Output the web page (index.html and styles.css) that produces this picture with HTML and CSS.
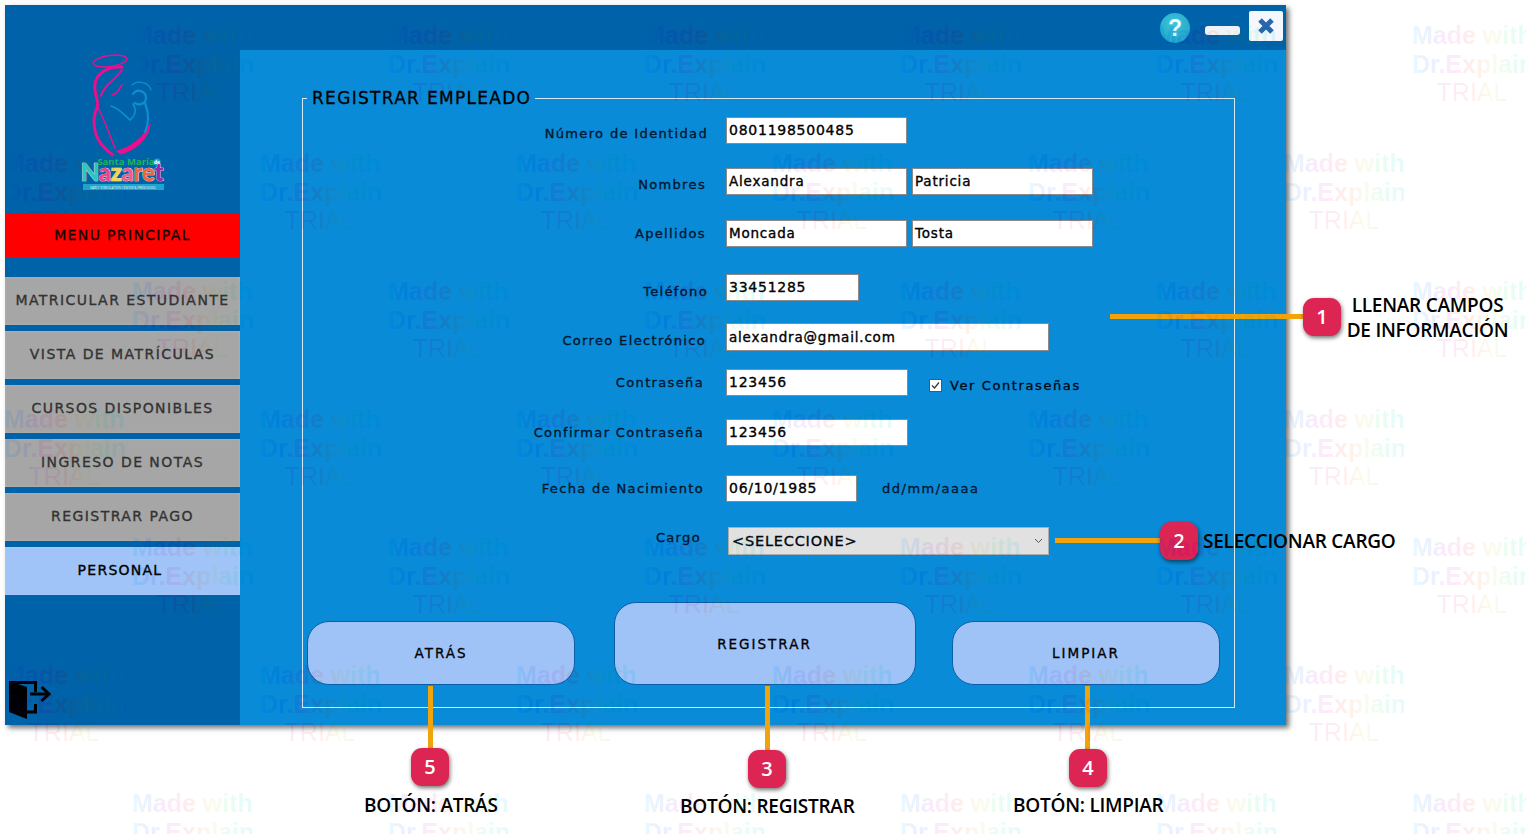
FILE: index.html
```html
<!DOCTYPE html>
<html lang="es">
<head>
<meta charset="utf-8">
<title>Registrar empleado</title>
<link rel="stylesheet" href="styles.css">
</head>
<body>
<div class="app">
  <aside class="side">
    <div class="logo">
      <svg width="95" height="148" viewBox="0 0 95 148">
        <g fill="none" stroke="#e8108c" stroke-linecap="round">
          <ellipse cx="35" cy="13" rx="17" ry="5.5" stroke-width="1.5" transform="rotate(-8 35 13)"/>
          <path d="M47 19C30 18 18 28 20 42C21 50 24 54 22 60C17 70 18 86 27 97C31 102 35 105 38 107" stroke-width="3"/>
          <path d="M47 22C40 32 28 38 26 48" stroke-width="2"/>
          <path d="M47 37C44 42 40 47 37 47" stroke-width="1.6"/>
          <path d="M22 58C30 72 34 86 40 100" stroke-width="1.5"/>
          <path d="M42 103C55 100 68 90 75 76C74 90 62 102 45 106Z" fill="#e8108c" stroke-width="1"/>
        </g>
        <g fill="none" stroke="#0b8fd0" stroke-linecap="round">
          <path d="M57 37C62 32 74 34 76 42" stroke-width="1.2"/>
          <path d="M58 46C62 40 71 43 71 50C71 56 64 58 60 55" stroke-width="2.2"/>
          <path d="M36 58C44 60 50 68 55 72C60 68 62 62 58 56" stroke-width="1.7"/>
          <path d="M70 55C74 65 74 75 70 84" stroke-width="2.2"/>
        </g>
        <text x="51" y="117" class="logo-small">Santa María</text>
        <circle cx="82" cy="114" r="3.5" fill="#1fa3cf"/>
        <text x="82" y="116" class="logo-de">de</text>
        <text x="47" y="133" class="logo-name"><tspan fill="#28c9c4">N</tspan><tspan fill="#f43f8c">a</tspan><tspan fill="#f6d34a">z</tspan><tspan fill="#f45a8c">a</tspan><tspan fill="#f2653a">r</tspan><tspan fill="#f2653a">e</tspan><tspan fill="#9a2ba8">t</tspan></text>
        <rect x="8" y="136" width="81" height="6" fill="#1fa3cf"/>
        <text x="48" y="140.5" class="logo-tiny">EARLY STIMULATION CENTER &amp; PRESCHOOL</text>
      </svg>
    </div>
    <div class="menu-title">MENU PRINCIPAL</div>
    <nav class="nav">
      <a class="nav-item">MATRICULAR ESTUDIANTE</a>
      <a class="nav-item">VISTA DE MATRÍCULAS</a>
      <a class="nav-item">CURSOS DISPONIBLES</a>
      <a class="nav-item">INGRESO DE NOTAS</a>
      <a class="nav-item">REGISTRAR PAGO</a>
      <a class="nav-item active">PERSONAL</a>
    </nav>
    <svg class="exit" width="44" height="44" viewBox="0 0 44 44">
      <path d="M1 2L19 8V40L1 33Z" fill="#000"/>
      <path d="M1 3.5H27.5V13M27.5 25V33H19" fill="none" stroke="#000" stroke-width="3"/>
      <path d="M22 15H40M33.5 8L41 15L33.5 22" fill="none" stroke="#000" stroke-width="3"/>
    </svg>
  </aside>
  <main class="main">
    <header class="titlebar">
      <span class="help">?</span>
      <span class="minimize"></span>
      <span class="close">
        <svg width="20" height="20" viewBox="0 0 20 20"><path d="M4 4L16 16M16 4L4 16" stroke="#2a66ad" stroke-width="5"/></svg>
      </span>
    </header>
    <div class="content">
      <fieldset class="panel">
        <legend class="legend">REGISTRAR EMPLEADO</legend>
        <div class="row r1"><label class="lbl low3">Número de Identidad</label><span class="inp w181">0801198500485</span></div>
        <div class="row r2"><label class="lbl pr2 low3">Nombres</label><span class="inp w181 thin">Alexandra</span><span class="inp w181 thin">Patricia</span></div>
        <div class="row r3"><label class="lbl pr2">Apellidos</label><span class="inp w181 thin">Moncada</span><span class="inp w181 thin">Tosta</span></div>
        <div class="row r4"><label class="lbl low4">Teléfono</label><span class="inp w133">33451285</span></div>
        <div class="row r5"><label class="lbl pr2 low4">Correo Electrónico</label><span class="inp w323 thin tall">alexandra@gmail.com</span></div>
        <div class="row r6"><label class="lbl pr4">Contraseña</label><span class="inp w182">123456</span><span class="check"><span class="box"><svg width="11" height="11" viewBox="0 0 11 11"><path d="M2 5.5L4.5 8L9 2.5" fill="none" stroke="#333" stroke-width="1.2"/></svg></span>Ver Contraseñas</span></div>
        <div class="row r7"><label class="lbl pr4">Confirmar Contraseña</label><span class="inp w182">123456</span></div>
        <div class="row r8"><label class="lbl pr4">Fecha de Nacimiento</label><span class="inp w131">06/10/1985</span><span class="hint">dd/mm/aaaa</span></div>
        <div class="row r9"><label class="lbl pr7">Cargo</label><span class="select"><span>&lt;SELECCIONE&gt;</span><svg width="9" height="6" viewBox="0 0 9 6"><path d="M1 1L4.5 4.5L8 1" fill="none" stroke="#555"/></svg></span></div>
        <div class="buttons">
          <button class="btn">ATRÁS</button>
          <button class="btn big">REGISTRAR</button>
          <button class="btn">LIMPIAR</button>
        </div>
      </fieldset>
    </div>
  </main>
</div>

<div class="callout line h" style="left:1110px;top:314px;width:193px"></div>
<div class="callout badge" style="left:1303px;top:298px">1</div>
<div class="callout note center" style="left:1340px;top:293px;width:175px">LLENAR CAMPOS<br>DE INFORMACIÓN</div>
<div class="callout line h" style="left:1055px;top:538px;width:105px"></div>
<div class="callout badge" style="left:1160px;top:522px">2</div>
<div class="callout note" style="left:1203px;top:529px">SELECCIONAR CARGO</div>
<div class="callout line v" style="left:765px;top:686px;height:64px"></div>
<div class="callout badge" style="left:748px;top:750px">3</div>
<div class="callout note" style="left:680px;top:794px">BOTÓN: REGISTRAR</div>
<div class="callout line v" style="left:1085px;top:686px;height:64px"></div>
<div class="callout badge" style="left:1069px;top:749px">4</div>
<div class="callout note" style="left:1013px;top:793px">BOTÓN: LIMPIAR</div>
<div class="callout line v" style="left:428px;top:686px;height:62px"></div>
<div class="callout badge" style="left:411px;top:748px">5</div>
<div class="callout note" style="left:364px;top:793px">BOTÓN: ATRÁS</div>

<div class="marks" id="marks"></div>
<script src="marks.js"></script>
</body>
</html>
```
FILE: marks.js
```js
var host = document.getElementById('marks');
var lines = ['Made with', 'Dr.Explain', 'TRIAL'];
for (var row = 0; row < 7; row++) {
  for (var col = 0; col < 6; col++) {
    var x = (row % 2 === 0 ? 128 : 0) + col * 256;
    var y = row * 128;
    var b = document.createElement('div');
    b.className = 'blur';
    b.style.left = x + 'px';
    b.style.top = y + 'px';
    host.appendChild(b);
    var t = document.createElement('div');
    t.className = 'tile';
    t.style.left = x + 'px';
    t.style.top = y + 'px';
    for (var i = 0; i < lines.length; i++) {
      var s = document.createElement('span');
      s.textContent = lines[i];
      s.setAttribute('data-t', lines[i]);
      if (i === 2) s.className = 'light';
      t.appendChild(s);
    }
    host.appendChild(t);
  }
}
```
FILE: styles.css
```css
* { box-sizing: border-box; }
html, body { margin: 0; height: 100%; }
body {
  padding: 5px;
  background: #fff;
  overflow: hidden;
  width: 1526px;
  height: 834px;
  position: relative;
  font-family: "DejaVu Sans", sans-serif;
}
.app {
  display: flex;
  width: 1281px;
  height: 720px;
  box-shadow: 3px 3px 5px rgba(0, 0, 0, .55);
}
.side {
  width: 235px;
  background: #0062a8;
  display: flex;
  flex-direction: column;
}
.logo { padding: 43px 0 0 70px; height: 208px; }
.logo svg { display: block; }
.logo-small { font: 700 9.5px "Open Sans", sans-serif; fill: #22b45a; text-anchor: middle; }
.logo-de { font: 700 5px "Open Sans", sans-serif; fill: #fff; text-anchor: middle; }
.logo-name { font: 900 24px "Lato", sans-serif; text-anchor: middle; stroke: #f4f0f6; stroke-width: .7px; paint-order: stroke; letter-spacing: -.3px; }
.logo-tiny { font: 3.2px "Open Sans", sans-serif; fill: #e8f6fb; text-anchor: middle; }
.menu-title {
  height: 44px;
  background: #fe0000;
  display: flex;
  align-items: center;
  justify-content: center;
  font-size: 14px;
  letter-spacing: 1.35px;
  color: #140000;
  -webkit-text-stroke: .3px #140000;
}
.nav { display: flex; flex-direction: column; gap: 6px; margin-top: 20px; }
.nav-item {
  height: 48px;
  background: #a6a6a6;
  color: #333;
  display: flex;
  align-items: center;
  justify-content: center;
  font-size: 14px;
  letter-spacing: 1.45px;
  padding-bottom: 2px;
  -webkit-text-stroke: .35px #333;
  box-shadow: inset 0 0 2px rgba(255, 255, 255, .25);
}
.nav-item.active { background: #a0c4f7; color: #000; padding-right: 5px; letter-spacing: 1.25px; -webkit-text-stroke-color: #000; }
.exit { margin: auto 0 2px 3px; display: block; }
.main { flex: 1; display: flex; flex-direction: column; min-width: 0; }
.titlebar {
  height: 45px;
  background: #0062a8;
  display: flex;
  align-items: center;
  justify-content: flex-end;
  padding: 0 3px 0 0;
}
.help {
  width: 30px;
  height: 30px;
  margin-right: 15px;
  border-radius: 50%;
  background: radial-gradient(circle at 45% 35%, #3cc4dc, #1b9fc4);
  color: #e9fbff;
  font: 700 23px/30px "Liberation Sans", sans-serif;
  text-align: center;
}
.minimize {
  width: 35px;
  height: 9px;
  margin: 6px 9px 0 0;
  border-radius: 3px;
  background: #eef3fa;
}
.close {
  width: 34px;
  height: 30px;
  margin-top: -3px;
  background: #f4f7fc;
  border-radius: 2px;
  display: flex;
  align-items: center;
  justify-content: center;
}
.content { flex: 1; background: #0a8bd8; padding: 38px 51px 17px 63px; }
.panel {
  margin: 0 0 0 -1px;
  height: 100%;
  border: 1px solid #d7e8f6;
  padding: 0 5px 0 5px;
  min-width: 0;
  position: relative;
}
.legend {
  margin-left: -1px;
  padding: 0 4px 0 5px;
  font-size: 17px;
  line-height: 20px;
  color: #000;
  letter-spacing: 1.3px;
  -webkit-text-stroke: .3px #000;
}
.row {
  display: flex;
  align-items: center;
  height: 28px;
  font-size: 13px;
  letter-spacing: 1.35px;
  color: #00172e;
  -webkit-text-stroke: .35px #00172e;
}
.r1 { margin-top: 8px; }
.r2 { margin-top: 23px; }
.r3 { margin-top: 24px; }
.r4 { margin-top: 26px; }
.r5 { margin-top: 21px; }
.r6 { margin-top: 18px; }
.r7 { margin-top: 22px; }
.r8 { margin-top: 28px; }
.r9 { margin-top: 25px; }
.lbl { width: 400px; text-align: right; margin-right: 18px; }
.lbl.pr2 { padding-right: 2px; }
.lbl.pr4 { padding-right: 4px; }
.lbl.pr7 { padding-right: 7px; margin-top: -7px; }
.lbl.low3 { margin-top: 6px; }
.lbl.low4 { margin-top: 8px; }
.inp {
  height: 27px;
  background: #fff;
  color: #000;
  font-size: 14px;
  letter-spacing: .75px;
  padding: 0 2px;
  display: flex;
  align-items: center;
  border: 1px solid #8a8a8a;
  margin-right: 5px;
  line-height: 1;
  -webkit-text-stroke: .35px #000;
}
.inp.thin { font-size: 13.5px; letter-spacing: .8px; padding-top: 2px; }
.inp.tall { height: 28px; padding-top: 3px; margin-top: 1px; }
.w181 { width: 181px; }
.w182 { width: 182px; }
.w133 { width: 133px; }
.w131 { width: 131px; }
.w323 { width: 323px; }
.check { display: flex; align-items: center; gap: 8px; margin-left: 16px; margin-top: 6px; color: #000; letter-spacing: 1.6px; }
.box {
  width: 13px;
  height: 13px;
  background: #fff;
  border: 1px solid #555;
  display: flex;
  align-items: center;
  justify-content: center;
  -webkit-text-stroke: 0;
}
.hint { margin-left: 20px; color: #001a33; letter-spacing: 1.5px; }
.select {
  width: 321px;
  height: 28px;
  margin-left: 2px;
  background: #e1e1e1;
  border: 1px solid #adadad;
  color: #000;
  font-size: 14.5px;
  letter-spacing: .8px;
  display: flex;
  align-items: center;
  justify-content: space-between;
  padding: 0 5px 0 3px;
}
.buttons {
  position: absolute;
  left: 4px;
  right: 14px;
  bottom: 22px;
  display: flex;
  align-items: flex-end;
  justify-content: space-between;
}
.btn {
  width: 268px;
  height: 64px;
  background: #9fc3f6;
  border: 1px solid #0b5ea9;
  border-radius: 22px;
  font: 500 13.5px "DejaVu Sans", sans-serif;
  letter-spacing: 2px;
  color: #000;
  padding: 0;
  -webkit-text-stroke: .3px #000;
}
.btn.big { width: 302px; height: 83px; margin-left: 2px; line-height: 76px; }
.callout { position: absolute; }
.line { background: #f0a30a; }
.line.h { height: 5px; }
.line.v { width: 5px; }
.badge {
  width: 38px;
  height: 38px;
  border-radius: 11px;
  background: #dd2553;
  color: #fff;
  font: 600 20px/38px "Open Sans", sans-serif;
  text-align: center;
  box-shadow: 1px 2px 4px rgba(0, 0, 0, .55);
}
.note {
  font: 600 19px/25px "Open Sans", sans-serif;
  color: #000;
  white-space: nowrap;
  letter-spacing: -.25px;
}
.center { text-align: center; }
.marks { position: absolute; inset: 0; overflow: hidden; pointer-events: none; }
.blur {
  position: absolute;
  width: 128px;
  height: 128px;
  backdrop-filter: blur(.7px);
}
.tile {
  position: absolute;
  width: 128px;
  height: 128px;
  padding: 21px 0 0 4px;
  display: flex;
  flex-direction: column;
  font: 700 25px/28.5px "Liberation Sans", sans-serif;
  white-space: nowrap;
  text-align: center;
}
.tile span {
  position: relative;
  width: 120px;
  background: linear-gradient(90deg,
    rgba(20, 200, 255, .1), rgba(90, 108, 255, .1), rgba(255, 60, 208, .1),
    rgba(255, 90, 60, .1), rgba(208, 224, 64, .1), rgba(48, 232, 144, .1), rgba(20, 200, 255, .1));
  -webkit-background-clip: text;
  background-clip: text;
  color: transparent;
}
.tile span::after {
  content: attr(data-t);
  position: absolute;
  left: 0;
  right: 0;
  top: 0;
  color: #f0f0f5;
  mix-blend-mode: color-burn;
}
.tile .light { font-weight: 400; }
```
